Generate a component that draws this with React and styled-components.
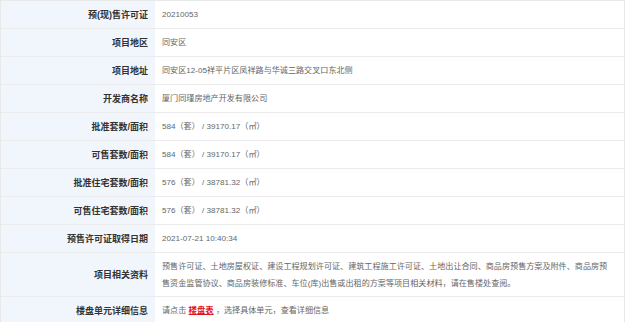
import React from 'react';
import styled, { createGlobalStyle } from 'styled-components';

const GlobalStyle = createGlobalStyle`
  body {
    margin: 0;
    background: #fff;
    font-family: 'Liberation Sans', 'Noto Sans CJK SC', sans-serif;
  }
`;

const rows = [
  { label: '预(现)售许可证', value: '20210053' },
  { label: '项目地区', value: '同安区' },
  { label: '项目地址', value: '同安区12-05祥平片区凤祥路与华诚三路交叉口东北侧' },
  { label: '开发商名称', value: '厦门同瑾房地产开发有限公司' },
  { label: '批准套数/面积', value: '584（套） / 39170.17（㎡）' },
  { label: '可售套数/面积', value: '584（套） / 39170.17（㎡）' },
  { label: '批准住宅套数/面积', value: '576（套） / 38781.32（㎡）' },
  { label: '可售住宅套数/面积', value: '576（套） / 38781.32（㎡）' },
  { label: '预售许可证取得日期', value: '2021-07-21 10:40:34' },
  {
    label: '项目相关资料',
    value:
      '预售许可证、土地房屋权证、建设工程规划许可证、建筑工程施工许可证、土地出让合同、商品房预售方案及附件、商品房预售资金监管协议、商品房装修标准、车位(库)出售或出租的方案等项目相关材料，请在售楼处查阅。',
    tall: true,
  },
];

const Table = styled.table`
  width: 625px;
  border-collapse: collapse;
  border: 1px solid #e9e9e9;
  table-layout: fixed;
`;

const Row = styled.tr`
  height: ${(p) => (p.$tall ? '44px' : '28px')};
  border-bottom: 1px solid #ebebeb;
`;

const Label = styled.th`
  width: 147px;
  padding: 0 7px 0 0;
  background: #f1f6fd;
  color: #333;
  font-size: 9px;
  font-weight: bold;
  text-align: right;
  vertical-align: middle;
`;

const Value = styled.td`
  padding: 0 10px 0 7px;
  color: #666;
  font-size: 8.1px;
  line-height: 17px;
  vertical-align: middle;
`;

const Link = styled.a`
  color: #e4151c;
  font-weight: bold;
  text-decoration: underline;
  font-size: 8.4px;
`;

const App = () => {
  return (
    <>
      <GlobalStyle />
      <Table>
        <tbody>
          {rows.map((r) => (
            <Row key={r.label} $tall={r.tall}>
              <Label>{r.label}</Label>
              <Value>{r.value}</Value>
            </Row>
          ))}
          <Row>
            <Label>楼盘单元详细信息</Label>
            <Value>
              请点击 <Link href="#">楼盘表</Link> ，选择具体单元，查看详细信息
            </Value>
          </Row>
        </tbody>
      </Table>
    </>
  );
};

export default App;
